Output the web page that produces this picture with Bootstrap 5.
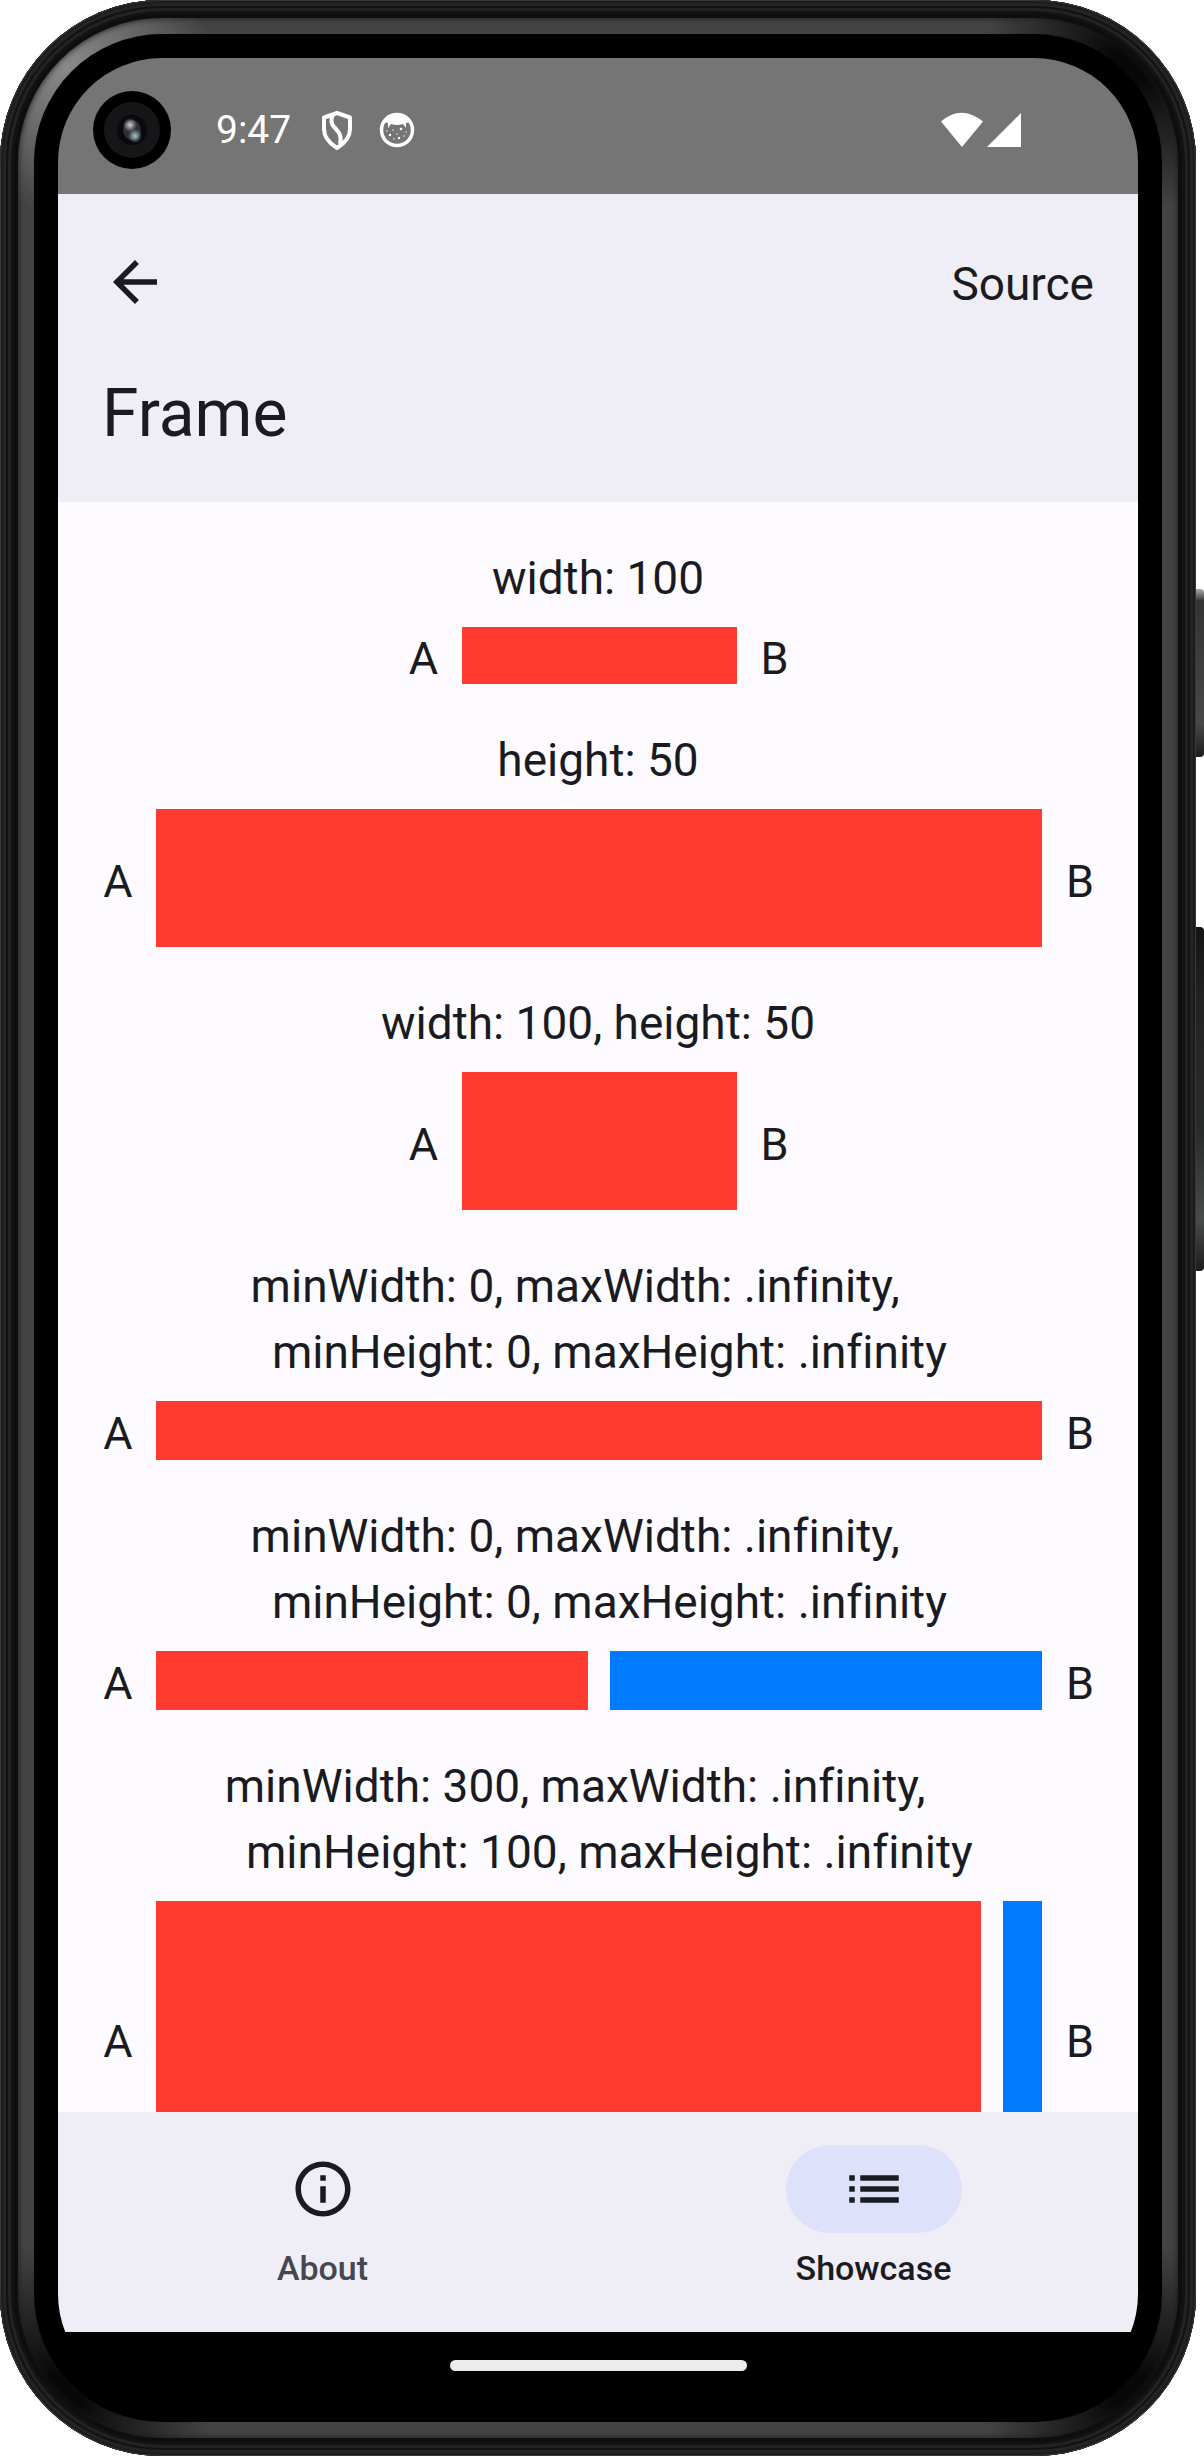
<!DOCTYPE html>
<html lang="en">
<head>
<meta charset="utf-8">
<meta name="viewport" content="width=device-width, initial-scale=1">
<title>Frame</title>
<link href="https://cdn.jsdelivr.net/npm/bootstrap@5.3.0/dist/css/bootstrap.min.css" rel="stylesheet">
<style>
  :root { --ink: #1a1b20; --surface: #efedf6; --page: #fdfbff; --red: #ff3b30; --blue: #007aff; }
  body { font-family: Roboto, "Noto Sans", sans-serif; font-variant-ligatures: none; color: var(--ink); background: #fff; }

  /* Device body: dark edge, satin rim, black bezel, screen */
  .device { padding-right: 8px; }
  .edge { border-radius: 162px; padding: 18px; background: #0e0e0e;
    box-shadow: inset 0 0 0 1px #363636, inset 0 0 0 3px #1c1c1c, inset 0 0 0 6px #242424, inset 0 0 0 8px #121212, inset 0 0 0 11px #232323, inset 0 0 0 14px #131313; }
  .rim { border-radius: 144px; padding: 16px; box-shadow: inset 0 0 6px #1a1a1a;
    background:
      radial-gradient(circle at 44px 44px, #8c8c8c 0, #8c8c8c00 150px),
      radial-gradient(circle at calc(100% - 44px) 44px, #080808 20px, #08080800 150px),
      radial-gradient(circle at 44px calc(100% - 44px), #080808 20px, #08080800 150px),
      radial-gradient(circle at calc(100% - 44px) calc(100% - 44px), #080808 20px, #08080800 150px),
      #434343; }
  .bezel { border-radius: 128px; padding: 24px; background: #000; }
  .screen { border-radius: 104px; background: #000; }
  .side-key { right: 0; width: 8px; border-radius: 0 4px 4px 0; }
  .key-power { top: 589px; height: 168px; background: linear-gradient(#aaa, #333 12px, #484848 80%, #1c1c1c); }
  .key-volume { top: 927px; height: 344px; background: linear-gradient(#141414, #222 20%, #2a2c2b 60%, #4a4c4b 85%, #1c1c1c); }

  .status-bar { height: 136px; padding: 8px 116px 0 34px; background: #757575; color: #fff; }
  .clock { font-size: 39px; line-height: 44px; margin-left: 44px; }

  .app-bar { background: var(--surface); padding: 0 44px 44px; }
  .bar-actions { height: 176px; }
  .source-btn { font-size: 46px; line-height: 66px; color: var(--ink); }
  .app-bar h1 { font-size: 66px; line-height: 88px; font-weight: 400; }

  .demo-list { background: var(--page); padding: 43px 44px 0; gap: 43px; }
  .demo { gap: 16px; }
  .demo p { font-size: 46px; line-height: 66px; }
  .sample { gap: 22px; font-size: 45px; line-height: 51px; }
  .tag-a, .tag-b { padding-top: 6px; flex: none; }
  .tag-a { width: 32px; text-align: center; }
  .tag-b { width: 30px; text-align: right; }
  .block { min-height: 57px; }
  .fill { flex: 1 1 0; min-height: 59px; }
  .w-100dp { width: 275px; flex: none; }
  .h-50dp { height: 138px; }
  .min-300dp { flex: 0 0 825px; }
  .h-100dp { height: 275px; }
  .is-red { background: var(--red); }
  .is-blue { background: var(--blue); }

  .tab-bar { background: var(--surface); gap: 22px; padding: 33px 0 42px; }
  .tab { font-size: 34px; line-height: 44px; font-weight: 500; gap: 13px; color: #46464f; }
  .tab.active { color: var(--ink); }
  .tab svg { color: var(--ink); }
  .indicator { width: 176px; height: 88px; }
  .active .indicator { background: #dde1f9; }
  .gesture-bar { height: 66px; }
  .gesture-pill { width: 297px; height: 11px; background: #ececec; }
</style>
</head>
<body>
<div class="device position-relative vh-100">
  <div class="side-key key-power position-absolute"></div>
  <div class="side-key key-volume position-absolute"></div>
  <div class="edge h-100">
    <div class="rim h-100">
      <div class="bezel h-100">
        <div class="screen h-100 d-flex flex-column overflow-hidden">

          <div class="status-bar d-flex align-items-center flex-shrink-0">
            <svg width="80" height="80" viewBox="0 0 80 80" aria-hidden="true">
              <defs>
                <radialGradient id="glintA"><stop offset="0" stop-color="#d0d3d5"/><stop offset="1" stop-color="#b9bdc000"/></radialGradient>
                <radialGradient id="glintB"><stop offset="0" stop-color="#a9c3cc"/><stop offset="1" stop-color="#a9c3cc00"/></radialGradient>
              </defs>
              <circle cx="40" cy="40" r="39"/>
              <circle cx="40" cy="40" r="28" fill="#161618"/>
              <circle cx="40" cy="40" r="15" fill="#0a0a0c"/>
              <ellipse cx="40" cy="40" rx="9" ry="10" fill="#2a3036"/>
              <circle cx="38" cy="35" r="7" fill="url(#glintA)"/>
              <circle cx="43" cy="46" r="7" fill="url(#glintB)"/>
            </svg>
            <span class="clock">9:47</span>
            <svg class="ms-4" width="44" height="44" viewBox="0 0 44 44" fill="none" stroke="#fff" stroke-width="4" stroke-linejoin="round" aria-hidden="true">
              <path d="M22 5 35 9.500V21c0 8-5 14-13 19C14 35 9 29 9 21V9.500Z"/>
              <path d="M18 7c-3 5-2 9 2 13s7 8 5 16"/>
            </svg>
            <svg class="ms-3" width="44" height="44" viewBox="0 0 44 44" aria-hidden="true">
              <circle cx="22" cy="22" r="15.500" fill="none" stroke="#fff" stroke-width="3.500"/>
              <path d="M8 14Q13 6 22 6t14 8l-5 1 0 5-3-4q-6 2-12 0l-3 4 0-5Z" fill="#fff"/>
              <g fill="#fff"><circle cx="12" cy="23" r=".7"/><circle cx="18" cy="22" r=".7"/><circle cx="26" cy="21" r="1.300"/><circle cx="31" cy="24" r=".7"/><circle cx="15" cy="27" r="1.200"/><circle cx="22" cy="26" r=".7"/><circle cx="29" cy="28" r=".7"/><circle cx="19" cy="31" r=".7"/><circle cx="24" cy="30" r="1.200"/></g>
            </svg>
            <svg class="ms-auto" width="82" height="36" viewBox="0 0 82 36" fill="#fff" aria-hidden="true">
              <path d="M1 9.500Q21 -8 43 9.500L22 35Z"/>
              <path d="M81 1V35H47Z"/>
            </svg>
          </div>

          <header class="app-bar flex-shrink-0">
            <div class="bar-actions d-flex align-items-center justify-content-between">
              <button type="button" class="btn p-0 border-0 lh-1" aria-label="Back">
                <svg width="66" height="66" viewBox="0 0 24 24" fill="#1a1b20"><path d="M20 11H7.830l5.590-5.590L12 4l-8 8 8 8 1.410-1.410L7.830 13H20v-2z"/></svg>
              </button>
              <button type="button" class="source-btn btn p-0 pt-1 border-0">Source</button>
            </div>
            <h1 class="m-0">Frame</h1>
          </header>

          <main class="demo-list d-flex flex-column flex-grow-1 overflow-hidden">
            <section class="demo d-flex flex-column flex-shrink-0">
              <p class="m-0 text-center">width: 100</p>
              <div class="sample d-flex align-items-center justify-content-center">
                <span class="tag-a">A</span><div class="block w-100dp is-red"></div><span class="tag-b">B</span>
              </div>
            </section>
            <section class="demo d-flex flex-column flex-shrink-0">
              <p class="m-0 text-center">height: 50</p>
              <div class="sample d-flex align-items-center">
                <span class="tag-a">A</span><div class="fill h-50dp is-red"></div><span class="tag-b">B</span>
              </div>
            </section>
            <section class="demo d-flex flex-column flex-shrink-0">
              <p class="m-0 text-center">width: 100, height: 50</p>
              <div class="sample d-flex align-items-center justify-content-center">
                <span class="tag-a">A</span><div class="w-100dp h-50dp is-red"></div><span class="tag-b">B</span>
              </div>
            </section>
            <section class="demo d-flex flex-column flex-shrink-0">
              <p class="m-0 text-center">minWidth: 0, maxWidth: .infinity,&nbsp;&nbsp;&nbsp;&nbsp;<br>&nbsp;&nbsp;minHeight: 0, maxHeight: .infinity</p>
              <div class="sample d-flex align-items-center">
                <span class="tag-a">A</span><div class="fill is-red"></div><span class="tag-b">B</span>
              </div>
            </section>
            <section class="demo d-flex flex-column flex-shrink-0">
              <p class="m-0 text-center">minWidth: 0, maxWidth: .infinity,&nbsp;&nbsp;&nbsp;&nbsp;<br>&nbsp;&nbsp;minHeight: 0, maxHeight: .infinity</p>
              <div class="sample d-flex align-items-center">
                <span class="tag-a">A</span><div class="fill is-red"></div><div class="fill is-blue"></div><span class="tag-b">B</span>
              </div>
            </section>
            <section class="demo d-flex flex-column flex-shrink-0">
              <p class="m-0 text-center">minWidth: 300, maxWidth: .infinity,&nbsp;&nbsp;&nbsp;&nbsp;<br>&nbsp;&nbsp;minHeight: 100, maxHeight: .infinity</p>
              <div class="sample d-flex align-items-center">
                <span class="tag-a">A</span><div class="min-300dp h-100dp is-red"></div><div class="fill h-100dp is-blue"></div><span class="tag-b">B</span>
              </div>
            </section>
          </main>

          <nav class="tab-bar d-flex flex-shrink-0">
            <a href="#about" class="tab d-flex flex-column align-items-center flex-fill w-50 text-decoration-none">
              <span class="indicator rounded-pill d-flex align-items-center justify-content-center">
                <svg width="66" height="66" viewBox="0 0 24 24" fill="currentColor" aria-hidden="true"><path d="M11 7h2v2h-2zm0 4h2v6h-2zm1-9C6.480 2 2 6.480 2 12s4.480 10 10 10 10-4.480 10-10S17.520 2 12 2zm0 18c-4.410 0-8-3.590-8-8s3.590-8 8-8 8 3.590 8 8-3.590 8-8 8z"/></svg>
              </span>
              About
            </a>
            <a href="#showcase" class="tab active d-flex flex-column align-items-center flex-fill w-50 text-decoration-none" aria-current="page">
              <span class="indicator rounded-pill d-flex align-items-center justify-content-center">
                <svg width="66" height="66" viewBox="0 0 24 24" fill="currentColor" aria-hidden="true"><path d="M3 11h2v2H3zm0 4h2v2H3zm0-8h2v2H3zm4 4h14v2H7zm0 4h14v2H7zm0-8h14v2H7z"/></svg>
              </span>
              Showcase
            </a>
          </nav>
          <div class="gesture-bar d-flex align-items-center justify-content-center flex-shrink-0">
            <div class="gesture-pill rounded-pill"></div>
          </div>
        </div>
      </div>
    </div>
  </div>
</div>
<script src="https://cdn.jsdelivr.net/npm/bootstrap@5.3.0/dist/js/bootstrap.bundle.min.js"></script>
</body>
</html>
